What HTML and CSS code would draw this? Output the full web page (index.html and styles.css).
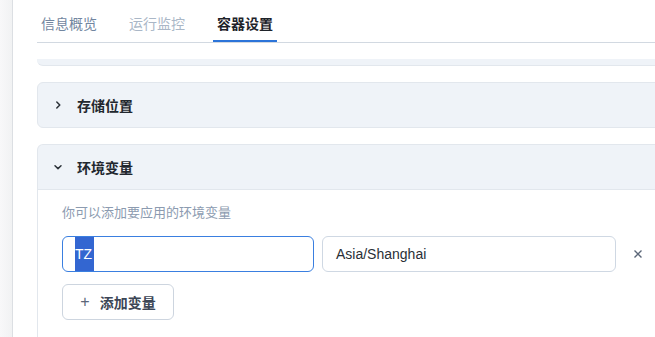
FILE: index.html
```html
<!DOCTYPE html>
<html lang="zh">
  <head>
    <meta charset="UTF-8" />
    <meta name="viewport" content="width=device-width, initial-scale=1.0" />
    <title>容器设置</title>
    <link rel="stylesheet" href="styles.css">
  </head>
  <body>
    <div class="sidebar"></div>

    <div class="main">
      <div class="tabs">
        <div class="tab">信息概览</div>
        <div class="tab muted">运行监控</div>
        <div class="tab active">容器设置</div>
      </div>

      <div class="panel">
        <div class="card-tail"></div>

        <div class="card">
          <div class="card-head">
            <svg class="chevron" width="10" height="10" viewBox="0 0 10 10">
              <path d="M3.8 2 L6.8 5 L3.8 8" />
            </svg>
            <span>存储位置</span>
          </div>
        </div>

        <div class="card open">
          <div class="card-head">
            <svg class="chevron" width="10" height="10" viewBox="0 0 10 10">
              <path d="M2 3.8 L5 6.6 L8 3.8" />
            </svg>
            <span>环境变量</span>
          </div>
          <div class="card-body">
            <p class="hint">你可以添加要应用的环境变量</p>
            <div class="env-row">
              <div class="field focused"><span class="selected">TZ</span></div>
              <div class="field value">Asia/Shanghai</div>
              <div class="remove">
                <svg width="10" height="10" viewBox="0 0 10 10">
                  <path d="M1.5 1.5 L8.5 8.5 M8.5 1.5 L1.5 8.5" />
                </svg>
              </div>
            </div>
            <button class="add-btn"><span class="plus">+</span>添加变量</button>
          </div>
        </div>
      </div>
    </div>
  </body>
</html>
```

FILE: styles.css
```css
body {
  margin: 0;
  display: flex;
  height: 337px;
  overflow: hidden;
  font-family: "Liberation Sans", "Noto Sans CJK SC", sans-serif;
  background-color: white;
}
.sidebar {
  width: 12px;
  flex: none;
  background: linear-gradient(to right, #f8f8f9, #f1f2f3);
  border-right: 1px solid #dcdfe3;
}
.main {
  flex: 1;
  padding-left: 24px;
  min-width: 0;
}
.tabs {
  display: flex;
  gap: 24px;
  height: 42px;
  border-bottom: 1px solid #d2d9e1;
}
.tab {
  padding: 14px 4px 0;
  height: 26px;
  font-size: 14px;
  line-height: 20px;
  color: #7286a0;
  border-bottom: 2px solid transparent;
}
.tab.muted {
  color: #aab7c7;
}
.tab.active {
  color: #1e232a;
  font-weight: bold;
  border-bottom-color: #2c74d9;
}
.panel {
  margin-top: 16px;
  display: flex;
  flex-direction: column;
  gap: 16px;
}
.card-tail {
  height: 6px;
  background-color: #eff3f8;
  border-bottom: 1px solid #e2e7ed;
  border-bottom-left-radius: 6px;
}
.card {
  margin-right: -20px;
  border: 1px solid #e2e7ed;
  border-radius: 6px;
  background-color: #eff3f8;
}
.card.open {
  border-bottom: none;
  border-bottom-left-radius: 0;
  border-bottom-right-radius: 0;
}
.card-head {
  height: 44px;
  display: flex;
  align-items: center;
  gap: 14px;
  padding-left: 15px;
  font-size: 14px;
  font-weight: bold;
  color: #22272e;
}
.chevron path {
  fill: none;
  stroke: #2b3138;
  stroke-width: 1.5;
  stroke-linecap: round;
  stroke-linejoin: round;
}
.card.open .card-head {
  border-bottom: 1px solid #e2e7ed;
}
.card-body {
  background-color: white;
  padding: 15px 24px 0;
  height: 132px;
}
.hint {
  margin: 0;
  font-size: 13px;
  line-height: 16px;
  color: #8c9bb0;
}
.env-row {
  display: flex;
  align-items: center;
  gap: 8px;
  margin-top: 15px;
}
.field {
  flex: none;
  height: 36px;
  box-sizing: border-box;
  border: 1px solid #cfd8e3;
  border-radius: 6px;
  font-size: 14px;
  line-height: 34px;
  color: #2a2f36;
  display: flex;
  align-items: stretch;
}
.field.focused {
  width: 252px;
  border-color: #3a7fe0;
  padding-left: 12px;
}
.selected {
  background-color: #3366d1;
  color: white;
  padding-right: 2px;
}
.field.value {
  width: 294px;
  padding-left: 13px;
}
.remove {
  flex: none;
  width: 28px;
  display: flex;
  justify-content: center;
}
.remove path {
  stroke: #5b6678;
  stroke-width: 1.4;
}
.add-btn {
  margin-top: 12px;
  height: 36px;
  width: 112px;
  border: 1px solid #cdd5df;
  border-radius: 6px;
  background-color: white;
  font-family: inherit;
  font-size: 14px;
  font-weight: bold;
  color: #3c4656;
  display: flex;
  align-items: center;
  justify-content: center;
  gap: 10px;
  padding: 0;
}
.plus {
  font-weight: normal;
  font-size: 16px;
  color: #5b6678;
}
```
